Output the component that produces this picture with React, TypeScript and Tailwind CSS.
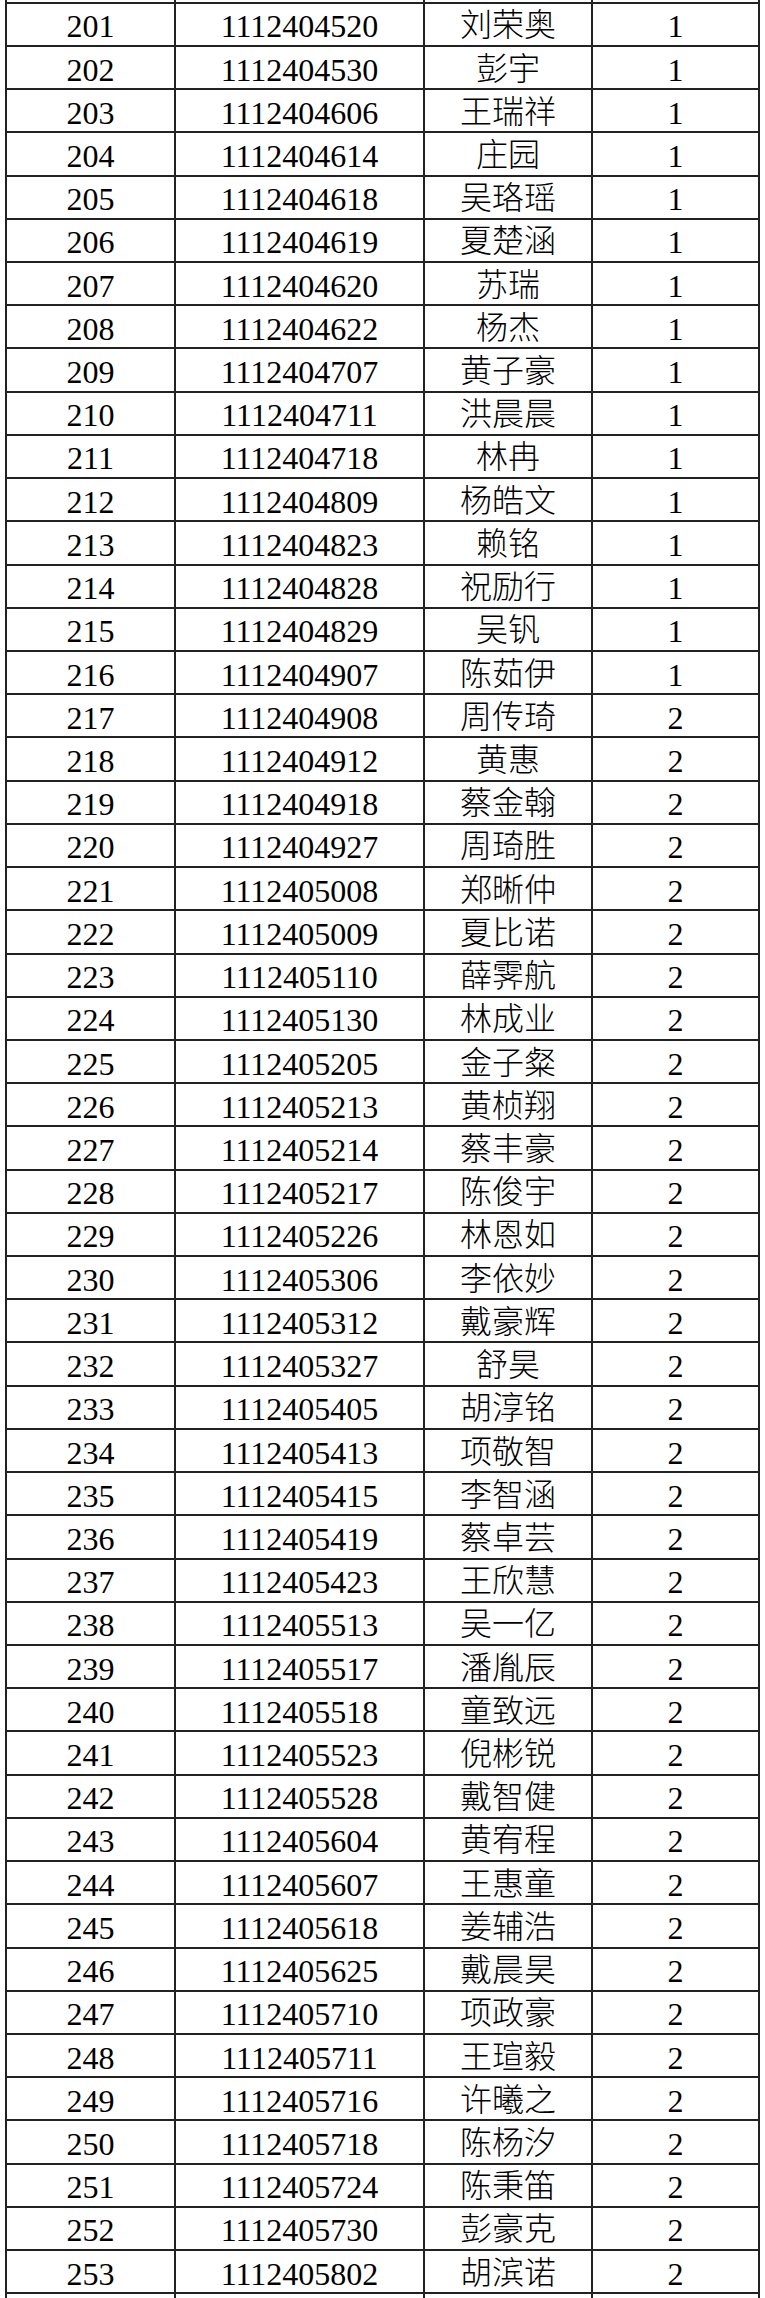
const rows: [number, string, string, number][] = [
  [201, "1112404520", "刘荣奥", 1],
  [202, "1112404530", "彭宇", 1],
  [203, "1112404606", "王瑞祥", 1],
  [204, "1112404614", "庄园", 1],
  [205, "1112404618", "吴珞瑶", 1],
  [206, "1112404619", "夏楚涵", 1],
  [207, "1112404620", "苏瑞", 1],
  [208, "1112404622", "杨杰", 1],
  [209, "1112404707", "黄子豪", 1],
  [210, "1112404711", "洪晨晨", 1],
  [211, "1112404718", "林冉", 1],
  [212, "1112404809", "杨皓文", 1],
  [213, "1112404823", "赖铭", 1],
  [214, "1112404828", "祝励行", 1],
  [215, "1112404829", "吴钒", 1],
  [216, "1112404907", "陈茹伊", 1],
  [217, "1112404908", "周传琦", 2],
  [218, "1112404912", "黄惠", 2],
  [219, "1112404918", "蔡金翰", 2],
  [220, "1112404927", "周琦胜", 2],
  [221, "1112405008", "郑晰仲", 2],
  [222, "1112405009", "夏比诺", 2],
  [223, "1112405110", "薛霁航", 2],
  [224, "1112405130", "林成业", 2],
  [225, "1112405205", "金子粲", 2],
  [226, "1112405213", "黄桢翔", 2],
  [227, "1112405214", "蔡丰豪", 2],
  [228, "1112405217", "陈俊宇", 2],
  [229, "1112405226", "林恩如", 2],
  [230, "1112405306", "李依妙", 2],
  [231, "1112405312", "戴豪辉", 2],
  [232, "1112405327", "舒昊", 2],
  [233, "1112405405", "胡淳铭", 2],
  [234, "1112405413", "项敬智", 2],
  [235, "1112405415", "李智涵", 2],
  [236, "1112405419", "蔡卓芸", 2],
  [237, "1112405423", "王欣慧", 2],
  [238, "1112405513", "吴一亿", 2],
  [239, "1112405517", "潘胤辰", 2],
  [240, "1112405518", "童致远", 2],
  [241, "1112405523", "倪彬锐", 2],
  [242, "1112405528", "戴智健", 2],
  [243, "1112405604", "黄宥程", 2],
  [244, "1112405607", "王惠童", 2],
  [245, "1112405618", "姜辅浩", 2],
  [246, "1112405625", "戴晨昊", 2],
  [247, "1112405710", "项政豪", 2],
  [248, "1112405711", "王瑄毅", 2],
  [249, "1112405716", "许曦之", 2],
  [250, "1112405718", "陈杨汐", 2],
  [251, "1112405724", "陈秉笛", 2],
  [252, "1112405730", "彭豪克", 2],
  [253, "1112405802", "胡滨诺", 2],
];

const cols = "grid grid-cols-[169px_249px_168px_167px] border-r-2 border-[#222]";
const cell = "border-l-2 border-[#222] flex items-center justify-center";

function EmptyRow({ h }: { h: string }) {
  return (
    <div className={`${cols} ${h}`}>
      <div className={cell} />
      <div className={cell} />
      <div className={cell} />
      <div className={cell} />
    </div>
  );
}

export default function App() {
  return (
    <div
      className="w-[765px] h-[2298px] overflow-hidden bg-white pl-[5px] text-black text-[32px] leading-none"
      style={{ fontFamily: '"Liberation Serif", "Noto Sans CJK SC", serif' }}
    >
      <div className="w-[755px]">
        <EmptyRow h="h-[1.7px]" />
        {rows.map(([no, id, name, grade]) => (
          <div key={no} className={`${cols} h-[43.22px] border-t-2`}>
            <div className={`${cell} pt-[4px]`}>{no}</div>
            <div className={`${cell} pt-[4px]`}>{id}</div>
            <div className={`${cell} pt-[2px] font-light`}>{name}</div>
            <div className={`${cell} pt-[4px]`}>{grade}</div>
          </div>
        ))}
        <div className="border-t-2 border-[#222] w-[755px]" />
        <EmptyRow h="h-[10px]" />
      </div>
    </div>
  );
}
